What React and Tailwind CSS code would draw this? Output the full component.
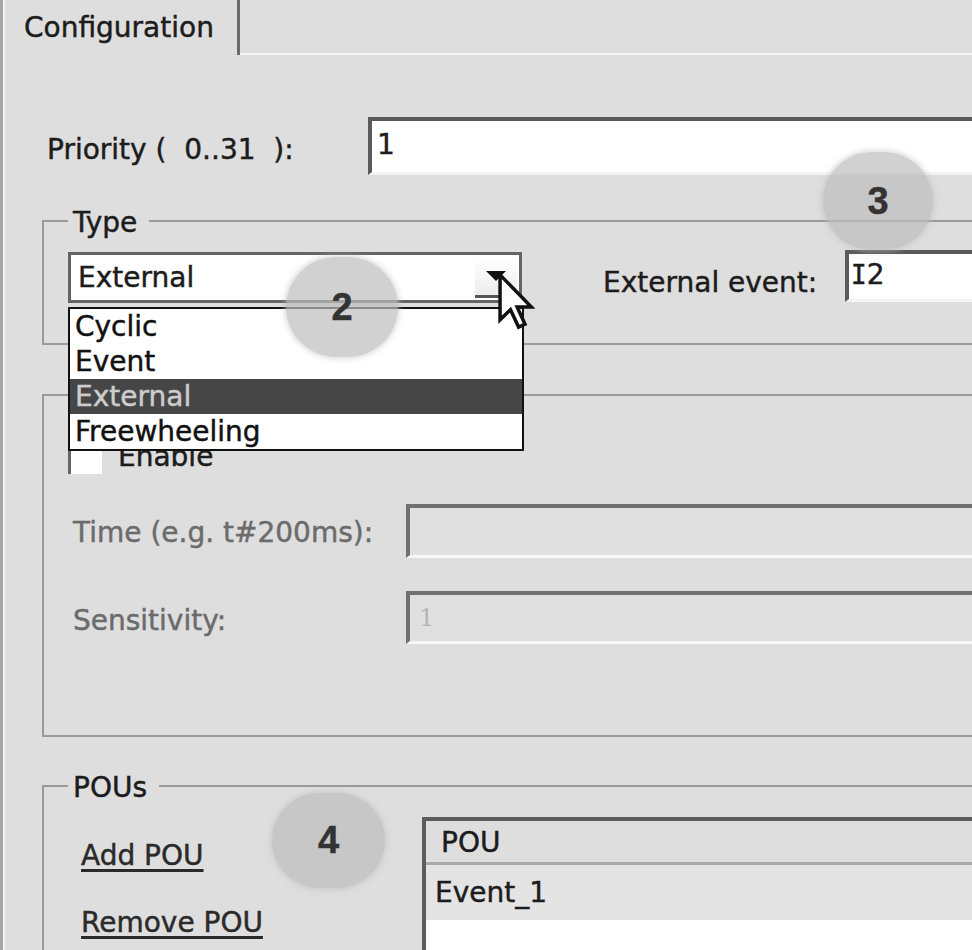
import React from 'react';

const Legend = ({ children }) => (
  <span className="absolute left-[24px] top-[-17px] bg-[#dedede] pl-[5px] pr-[12px] leading-[36px]">{children}</span>
);

const Bubble = ({ n, className }) => (
  <div
    className={`absolute rounded-full bg-[#bebebe]/70 shadow-[0_0_5px_2px_rgba(190,190,190,0.5)] flex items-center justify-center font-['Liberation_Sans',sans-serif] font-bold text-[38px] text-[#333] ${className}`}
  >
    {n}
  </div>
);

const options = ['Cyclic', 'Event', 'External', 'Freewheeling'];

export default function App() {
  return (
    <div className="relative w-[972px] h-[950px] overflow-hidden bg-[#dedede] border-l-[3px] border-[#a6a6a6] font-['DejaVu_Sans',sans-serif] text-[28px] text-[#1c1c1c] [-webkit-text-stroke:0.45px_currentColor]">
      <div className="h-full border-l-2 border-[#f2f2f2] flex flex-col">
        {/* Tab strip */}
        <div className="flex h-[55px] shrink-0">
          <div className="w-[235px] border-r-[3px] border-[#6a6a6a] pl-[19px] pt-[10px] leading-[36px]">Configuration</div>
          <div className="flex-1 border-b-2 border-[#f6f6f6]" />
        </div>

        {/* Priority */}
        <div className="flex items-start mt-[62px]">
          <div className="w-[363px] shrink-0 pl-[42px] mt-[15px] leading-[36px] whitespace-pre">Priority (  0..31  ):</div>
          <div className="flex-1 h-[58px] bg-white border-t-4 border-l-4 border-[#5a5a5a] border-b-[3px] border-b-[#f4f4f4] pl-[5px] leading-[48px]">1</div>
        </div>

        {/* Type */}
        <div className="relative ml-[37px] mt-[45px] h-[125px] border-2 border-r-0 border-[#999] flex items-start pl-[24px]">
          <Legend>Type</Legend>
          <div className="relative mt-[30px] w-[454px] h-[51px] shrink-0">
            <div className="h-full bg-white border-[3px] border-[#646464] flex items-center pl-[7px]">
              <span className="flex-1">External</span>
              <div className="w-[42px] h-[41px] self-start mt-[2px] mr-[2px] bg-gradient-to-b from-white to-[#ececec] border-b-[3px] border-[#555] flex items-center justify-center">
                <svg width="20" height="10" viewBox="0 0 20 10">
                  <polygon points="0,0 20,0 10,10" fill="#111" />
                </svg>
              </div>
            </div>
            {/* Open list */}
            <div className="absolute left-0 top-[55px] w-[456px] bg-white border-2 border-[#111] z-10">
              {options.map((o) => (
                <div
                  key={o}
                  className={`h-[35px] pl-[5px] leading-[35px] ${o === 'External' ? 'bg-[#464646] text-[#cdcdcd]' : 'text-[#111]'}`}
                >
                  {o}
                </div>
              ))}
            </div>
          </div>
          <div className="ml-[81px] w-[242px] shrink-0 mt-[43px] leading-[36px]">External event:</div>
          <div className="flex-1 mt-[28px] h-[52px] bg-white border-t-4 border-l-4 border-[#5a5a5a] border-b-[3px] border-b-[#f4f4f4] pl-[2px] leading-[42px]">
            <span className="font-['DejaVu_Sans_Mono',monospace] text-[26px]">I</span>2
          </div>
        </div>

        {/* Cyclic settings (disabled) */}
        <div className="relative ml-[37px] mt-[49px] h-[343px] border-2 border-r-0 border-[#999] flex flex-col">
          <div className="flex items-start mt-[44px] pl-[24px]">
            <div className="w-[34px] h-[34px] bg-white border-t-[3px] border-l-[3px] border-[#666]" />
            <span className="ml-[16px] -mt-[1px] leading-[36px] text-[#1c1c1c]">Enable</span>
          </div>
          <div className="flex items-start mt-[29px]">
            <div className="w-[362px] shrink-0 pl-[29px] mt-[11px] leading-[36px] text-[#6b6b6b]">Time (e.g. t#200ms):</div>
            <div className="flex-1 h-[54px] bg-[#e0e0e0] border-t-4 border-l-4 border-[#707070] border-b-[3px] border-b-[#f7f7f7]" />
          </div>
          <div className="flex items-start mt-[33px]">
            <div className="w-[362px] shrink-0 pl-[29px] mt-[12px] leading-[36px] text-[#6b6b6b]">Sensitivity:</div>
            <div className="flex-1 h-[53px] bg-[#e0e0e0] border-t-4 border-l-4 border-[#707070] border-b-[3px] border-b-[#f7f7f7] pl-[9px] leading-[46px] text-[#b4b4b4] font-['DejaVu_Serif',serif] text-[24px] [-webkit-text-stroke:0px]">1</div>
          </div>
        </div>

        {/* POUs */}
        <div className="relative ml-[37px] mt-[48px] flex-1 border-2 border-r-0 border-b-0 border-[#999] flex items-start">
          <Legend>POUs</Legend>
          <div className="w-[378px] shrink-0 pl-[37px] pt-[51px] flex flex-col gap-[31px] leading-[36px] text-[#2a2a2a]">
            <span className="underline decoration-[3px] underline-offset-[4px]">Add POU</span>
            <span className="underline decoration-[3px] underline-offset-[4px]">Remove POU</span>
          </div>
          <div className="flex-1 self-stretch mt-[30px] bg-white border-t-4 border-l-4 border-[#5c5c5c]">
            <div className="h-[44px] bg-[#dedede] border-b-[3px] border-[#a9a9a9] pl-[15px] pt-[3px] leading-[38px]">POU</div>
            <div className="h-[55px] bg-[#e4e4e4] pl-[9px] leading-[55px]">Event_1</div>
          </div>
        </div>
      </div>

      {/* Callout bubbles */}
      <Bubble n="2" className="left-[283px] top-[257px] w-[112px] h-[100px] z-20" />
      <Bubble n="3" className="left-[820px] top-[152px] w-[110px] h-[98px] z-20" />
      <Bubble n="4" className="left-[269px] top-[793px] w-[113px] h-[95px] z-20" />

      {/* Mouse pointer */}
      <svg className="absolute left-[494px] top-[272px] z-30" width="38" height="58" viewBox="0 0 13 20">
        <path d="M1 1 V16.5 L4.6 13 L7.4 19 L9.6 18 L6.9 12.1 H11.8 Z" fill="#fff" stroke="#111" strokeWidth="1.2" strokeLinejoin="miter" />
      </svg>
    </div>
  );
}
